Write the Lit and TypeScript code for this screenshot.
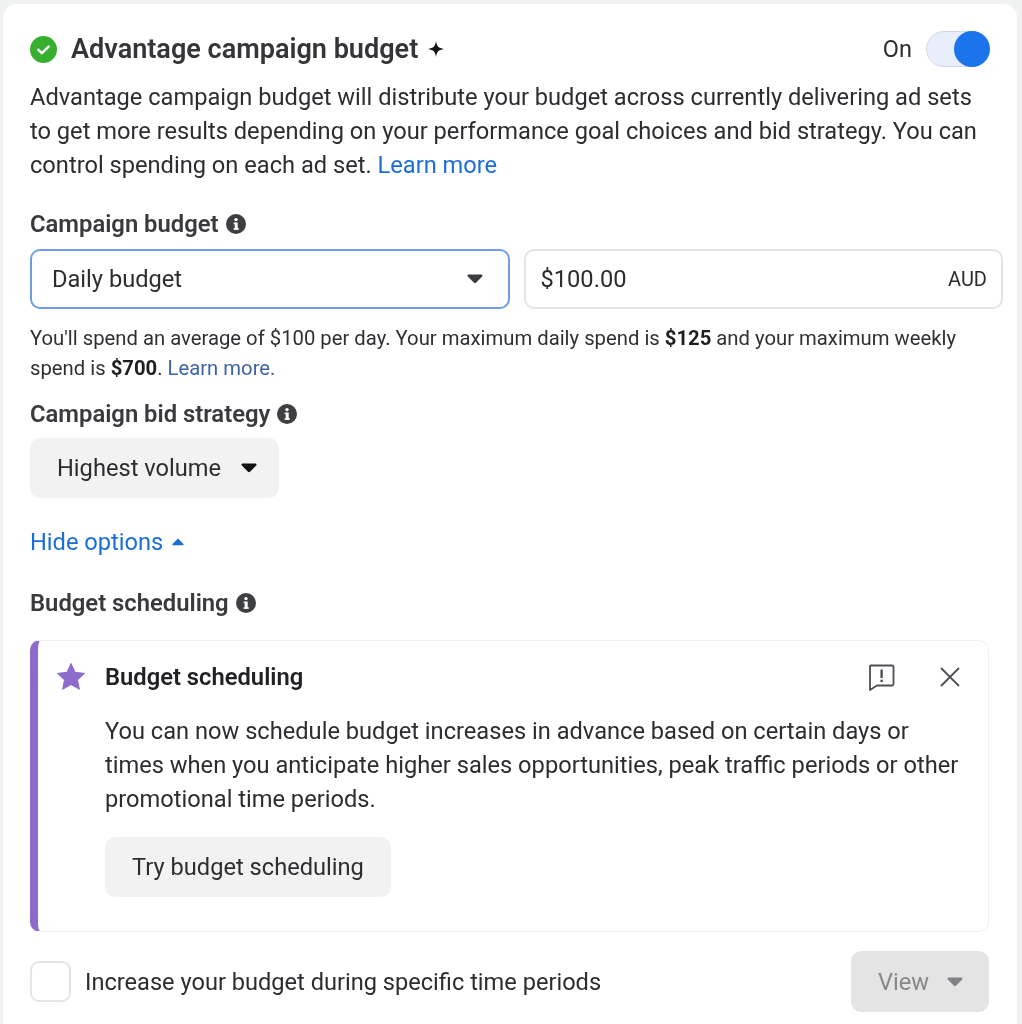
import { LitElement, html, css } from "lit";
import { customElement } from "lit/decorators.js";

const info = html`<svg class="info" viewBox="0 0 20 20" width="20" height="20"><circle cx="10" cy="10" r="10" fill="#3d3f42"/><rect x="8.7" y="8.6" width="3" height="7" fill="#fff"/><rect x="7.6" y="8.6" width="3" height="1.6" fill="#fff"/><rect x="7.6" y="14.2" width="5.2" height="1.6" fill="#fff"/><circle cx="10" cy="5.6" r="1.7" fill="#fff"/></svg>`;
const caret = (w: number, fill: string) => html`<svg width=${w} height=${Math.round(w * 0.62)} viewBox="0 0 16 10"><path d="M1.6 0.6h12.8c1 0 1.5 1.1.8 1.8L9 8.8c-.6.6-1.4.6-2 0L.8 2.4C.1 1.7.6.6 1.6.6z" fill=${fill}/></svg>`;

@customElement("app-root")
export class AppRoot extends LitElement {
  static styles = css`
    :host { display: block; width: 1022px; height: 1024px; overflow: hidden; background: #f0f2f2; font-family: Roboto, "Liberation Sans", sans-serif; color: #2b2d30; }
    .panel { box-sizing: border-box; margin: 4px 5px 0 3px; height: 1020px; padding: 28px 28px 0 27px; background: #fff; border-radius: 14px 14px 0 0; filter: blur(0.6px); }
    .head { display: flex; align-items: center; height: 34px; }
    .check { margin-right: 14px; flex: none; }
    .title { font-size: 27.05px; font-weight: 600; line-height: 34px; color: #333538; }
    .spark { margin-left: 10px; flex: none; }
    .on { margin-left: auto; font-size: 23.5px; margin-right: 14px; color: #2b2d30; }
    .toggle { box-sizing: border-box; width: 63px; height: 36px; border-radius: 18px; background: #e8eefb; border: 1.5px solid #d3d8e2; position: relative; }
    .knob { position: absolute; top: -1.5px; right: -1.5px; width: 36px; height: 36px; border-radius: 50%; background: #1b74ec; }
    .desc { margin: 14px 0 0; font-size: 23.65px; line-height: 34px; }
    a { color: #1a6ed8; text-decoration: none; }
    .label { display: flex; align-items: center; gap: 7px; font-size: 23.8px; font-weight: 600; line-height: 30px; color: #383a3d; }
    .budget { margin-top: 27px; }
    .inputs { display: grid; grid-template-columns: 1fr 1fr; gap: 14px; margin: 10px -14px 0 0; height: 60px; }
    .select, .amount { box-sizing: border-box; min-width: 0; border-radius: 10px; display: flex; align-items: center; justify-content: space-between; background: #fff; font-size: 23.65px; }
    .select { border: 2px solid #6f9de8; padding: 0 25px 0 20px; }
    .amount { border: 2px solid #e3e5e8; padding: 0 14px 0 15px; }
    .aud { font-size: 20px; }
    .note { margin: 14px 0 0; font-size: 20.28px; line-height: 30px; color: #2e3033; }
    .note b { font-weight: 700; color: #1c1e21; }
    .note a { color: #3d63a8; }
    .bid { margin-top: 16px; }
    .pill { display: inline-flex; align-items: center; gap: 20px; box-sizing: border-box; height: 60px; margin-top: 9px; padding: 0 22px 0 27px; background: #f2f2f2; border-radius: 10px; font-size: 23.65px; }
    .hide { display: flex; align-items: center; gap: 9px; margin-top: 27px; height: 34px; font-size: 23.65px; color: #1a6ed8; }
    .sched { margin-top: 29px; }
    .card { box-sizing: border-box; height: 292px; margin-top: 22px; border-radius: 10px; border: 1.5px solid #f0f1f2; border-left: 8px solid #8c6bcc; display: flex; padding: 21px 28px 0 19px; }
    .star { flex: none; margin-right: 20px; margin-top: 1px; }
    .body { flex: 1; min-width: 0; }
    .card-head { display: flex; align-items: center; height: 30px; }
    .card-title { font-size: 23.75px; font-weight: 600; color: #1f2124; }
    .fb { margin-left: auto; margin-right: 45px; }
    .card-text { margin: 22px 0 0; font-size: 23.65px; line-height: 34px; }
    .try { display: inline-flex; align-items: center; height: 60px; margin-top: 21px; padding: 0 27px; background: #f2f2f2; border-radius: 10px; font-size: 23.65px; }
    .row { display: flex; align-items: center; margin-top: 19px; height: 61px; }
    .box { box-sizing: border-box; width: 41px; height: 41px; border: 2px solid #e3e5e8; border-radius: 9px; margin-right: 14px; }
    .row-text { font-size: 23.6px; }
    .view { margin-left: auto; box-sizing: border-box; width: 138px; height: 61px; display: flex; align-items: center; gap: 18px; padding-left: 27px; background: #e4e4e4; border-radius: 10px; font-size: 23.65px; color: #86888a; }
  `;

  render() {
    return html`<div class="panel">
      <div class="head">
        <svg class="check" width="27" height="27" viewBox="0 0 28 28"><circle cx="14" cy="14" r="14" fill="#36ae2e"/><path d="M8.6 14.3l3.700 3.400 7-6.600" fill="none" stroke="#fff" stroke-width="2.600" stroke-linecap="round" stroke-linejoin="round"/></svg>
        <span class="title">Advantage campaign budget</span>
        <svg class="spark" width="16" height="16" viewBox="0 0 18 18"><path d="M9 0c.9 6 2.500 7.900 9 9-6.500 1.100-8.100 3-9 9-.9-6-2.500-7.900-9-9 6.500-1.100 8.100-3 9-9z" fill="#111"/></svg>
        <span class="on">On</span>
        <div class="toggle"><div class="knob"></div></div>
      </div>
      <p class="desc">Advantage campaign budget will distribute your budget across currently delivering ad sets to get more results depending on your performance goal choices and bid strategy. You can control spending on each ad set. <a>Learn more</a></p>
      <div class="label budget">Campaign budget ${info}</div>
      <div class="inputs">
        <div class="select"><span>Daily budget</span>${caret(16, "#3a3c40")}</div>
        <div class="amount"><span>$100.00</span><span class="aud">AUD</span></div>
      </div>
      <p class="note">You'll spend an average of $100 per day. Your maximum daily spend is <b>$125</b> and your maximum weekly spend is <b>$700</b>. <a>Learn more.</a></p>
      <div class="label bid">Campaign bid strategy ${info}</div>
      <div class="pill"><span>Highest volume</span>${caret(16, "#111")}</div>
      <div class="hide"><span>Hide options</span><svg width="12" height="8" viewBox="0 0 16 10"><path d="M1.600 9.400h12.800c1 0 1.500-1.100.8-1.800L9 1.200c-.6-.6-1.400-.6-2 0L.8 7.600c-.7.700-.2 1.800.8 1.800z" fill="#1a6ed8"/></svg></div>
      <div class="label sched">Budget scheduling ${info}</div>
      <div class="card">
        <svg class="star" width="28" height="27" viewBox="0 0 28 27"><path d="M14 .5l4 8.800 9.500 1.100-7 6.500 1.900 9.400L14 21.600l-8.400 4.700 1.900-9.400-7-6.500 9.500-1.100z" fill="#8c6bcc" stroke="#8c6bcc" stroke-linejoin="round"/></svg>
        <div class="body">
          <div class="card-head">
            <span class="card-title">Budget scheduling</span>
            <svg class="fb" width="27" height="27" viewBox="0 0 27 27"><path d="M3 1.500h21a1.500 1.500 0 0 1 1.500 1.500v17a1.500 1.500 0 0 1-1.500 1.500H9L2 26V3a1 1 0 0 1 1-1.500z" fill="none" stroke="#4d5055" stroke-width="1.800" stroke-linejoin="round"/><rect x="12.500" y="5.500" width="2.200" height="8.500" fill="#3f4246"/><rect x="12.500" y="15.700" width="2.200" height="2.400" fill="#3f4246"/></svg>
            <svg width="20" height="20" viewBox="0 0 20 20"><path d="M1 1l18 18M19 1L1 19" stroke="#4d5055" stroke-width="1.800" fill="none"/></svg>
          </div>
          <p class="card-text">You can now schedule budget increases in advance based on certain days or times when you anticipate higher sales opportunities, peak traffic periods or other promotional time periods.</p>
          <div class="try">Try budget scheduling</div>
        </div>
      </div>
      <div class="row">
        <div class="box"></div>
        <span class="row-text">Increase your budget during specific time periods</span>
        <div class="view"><span>View</span>${caret(16, "#808285")}</div>
      </div>
    </div>`;
  }
}
